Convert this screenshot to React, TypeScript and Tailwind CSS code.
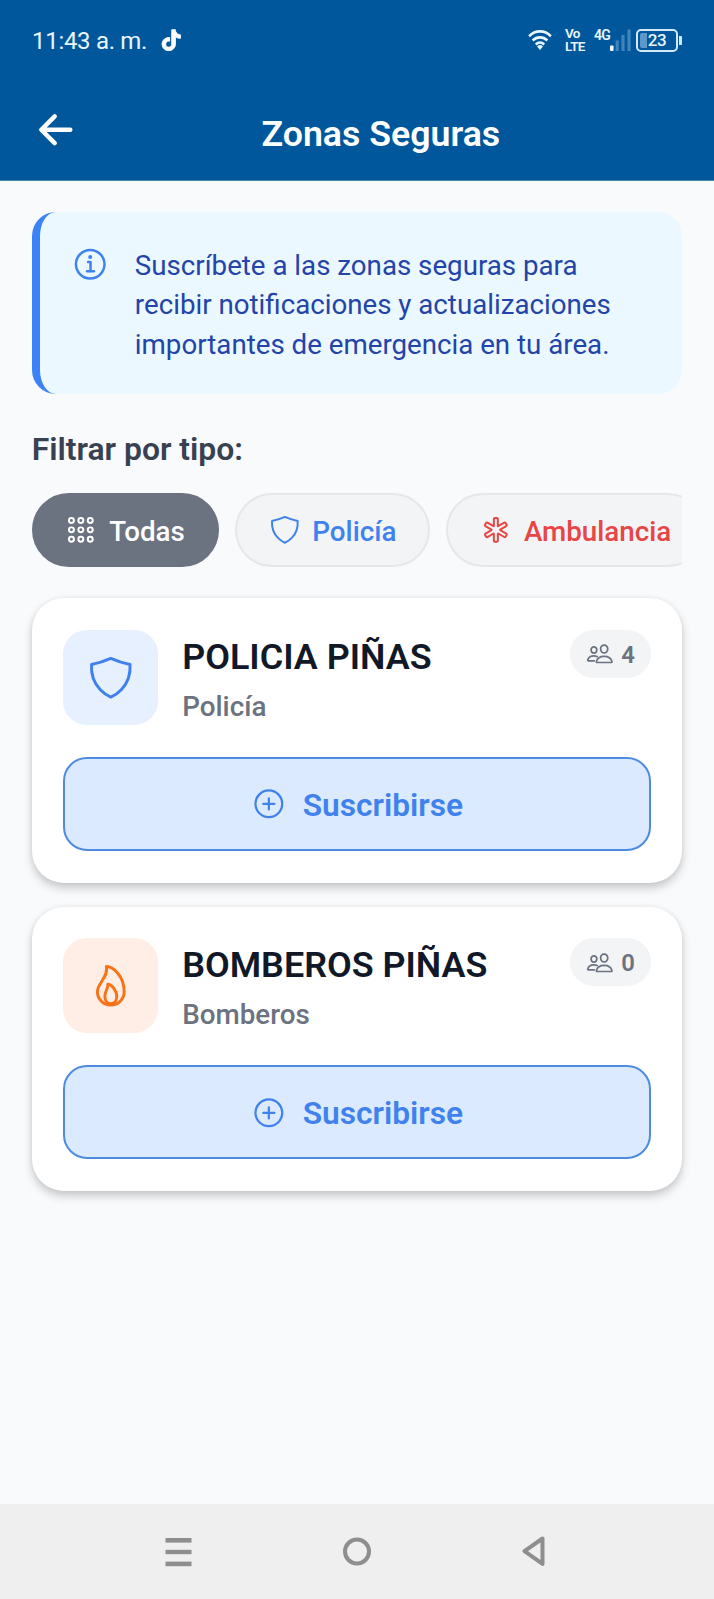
import type { ReactNode } from 'react';
import {
  IoAddCircleOutline,
  IoAppsOutline,
  IoArrowBack,
  IoFlameOutline,
  IoInformationCircleOutline,
  IoLogoTiktok,
  IoMedicalOutline,
  IoPeopleOutline,
  IoShieldOutline,
} from 'react-icons/io5';

function WifiIcon() {
  return (
    <svg width="24" height="20" viewBox="0 0 26 20" preserveAspectRatio="none" fill="none" stroke="#e9f6ff" strokeWidth="2.7">
      <path d="M1.2 6.2a17 17 0 0 1 23.6 0" />
      <path d="M5 10.4a12 12 0 0 1 16 0" />
      <path d="M8.4 14.4a7 7 0 0 1 9.2 0" />
      <path d="M9.8 16.4a5 5 0 0 1 6.4 0L13 20Z" fill="#e9f6ff" stroke="none" />
    </svg>
  );
}

function SignalBars() {
  return (
    <svg width="22" height="22" viewBox="0 0 22 22">
      <rect x="0" y="16.5" width="3.6" height="5.5" rx="1" fill="#f0f9ff" />
      <rect x="5.6" y="11.5" width="3.2" height="10.5" fill="#3f84bb" />
      <rect x="11.4" y="6" width="3.2" height="16" fill="#3f84bb" />
      <rect x="17.4" y="0.5" width="3.2" height="21.5" fill="#3f84bb" />
    </svg>
  );
}

function Battery() {
  return (
    <div className="flex items-center">
      <div className="relative flex h-[23px] w-[42px] items-center justify-center rounded-[5px] border-2 border-[#d3e9f8]">
        <div className="absolute left-[2px] top-[2px] h-[15px] w-[7px] rounded-l-[2px] bg-[#5c98c8]" />
        <span className="relative text-[17px] font-medium leading-none tracking-[-0.5px] text-[#e9f6ff]">23</span>
      </div>
      <div className="ml-[1px] h-[9px] w-[3px] rounded-r-[1px] bg-[#d3e9f8]" />
    </div>
  );
}

function StatusBar() {
  return (
    <div className="flex h-[80px] items-center pl-[32px] pr-[32px] text-[#e9f6ff]">
      <span className="pt-[1px] text-[24px] tracking-[-0.3px]">11:43 a. m.</span>
      <IoLogoTiktok className="ml-[13px] size-[22.5px] stroke-white stroke-[22] text-white" />
      <div className="ml-auto flex items-center">
        <WifiIcon />
        <div className="ml-[13px] flex w-[23px] flex-col text-[13.5px] font-semibold leading-[13px] tracking-[-0.6px]">
          <span>Vo</span>
          <span>LTE</span>
        </div>
        <div className="ml-[6px] flex h-[22px] items-start">
          <span className="w-[16px] text-[14px] font-semibold leading-[13px] tracking-[-0.8px]">4G</span>
          <SignalBars />
        </div>
        <div className="ml-[4px]">
          <Battery />
        </div>
      </div>
    </div>
  );
}

function Chip({ icon, label, className }: { icon: ReactNode; label: string; className: string }) {
  return (
    <button
      className={`flex h-[73.5px] shrink-0 items-center rounded-[40px] border-2 pl-[31.7px] pr-[32px] text-[27.75px] font-medium ${className}`}
    >
      {icon}
      <span className="ml-[12.1px] pt-[3px] leading-none">{label}</span>
    </button>
  );
}

function ZoneCard({
  icon,
  iconBg,
  name,
  type,
  members,
}: {
  icon: ReactNode;
  iconBg: string;
  name: string;
  type: string;
  members: number;
}) {
  return (
    <section className="h-[284.7px] rounded-[32px] bg-white p-[31.7px] shadow-[0_5px_10px_rgba(0,0,0,0.2),0_0_5px_rgba(0,0,0,0.06)]">
      <div className="flex items-start">
        <div className={`flex size-[95px] shrink-0 items-center justify-center rounded-[24px] ${iconBg}`}>
          {icon}
        </div>
        <div className="ml-[23.8px] flex flex-col">
          <h2 className="mt-[5.5px] text-[35.9px] font-semibold leading-[42px] text-[#111827]">{name}</h2>
          <p className="mt-[12.5px] text-[27.8px] font-medium leading-[34px] text-[#6b7280]">{type}</p>
        </div>
        <div className="ml-auto flex h-[48px] items-center rounded-[24px] bg-[#f3f4f6] px-[15.8px] text-[#6b7280]">
          <IoPeopleOutline className="size-[27.7px]" />
          <span className="ml-[8px] pt-[3px] text-[23.8px] font-semibold leading-none">{members}</span>
        </div>
      </div>
      <button className="mt-[32px] flex h-[94px] w-full items-center justify-center rounded-[24px] border-2 border-[#4d8be0] bg-[#dbeafe] text-[#3f82ee]">
        <IoAddCircleOutline className="size-[35.7px]" />
        <span className="ml-[16px] pt-[4px] text-[31.7px] font-semibold leading-none">Suscribirse</span>
      </button>
    </section>
  );
}

export default function App() {
  return (
    <div className="flex h-[1599px] w-[714px] flex-col overflow-hidden bg-[#f9fafc] font-['Roboto',sans-serif]">
      <header className="h-[181px] shrink-0 border-b border-[#3f8ba8] bg-[#01579b]">
        <StatusBar />
        <div className="flex h-[100px] items-center pl-[31.7px] text-white">
          <IoArrowBack className="size-[47.6px]" />
          <h1 className="ml-[182.2px] pt-[9px] text-[35.7px] font-semibold leading-none">Zonas Seguras</h1>
        </div>
      </header>

      <main className="flex-1 px-[31.7px] pt-[31px]">
        <div className="flex h-[182.4px] items-start rounded-[24px] border-l-8 border-[#3b82f6] bg-[#ebf8ff] pl-[31.7px] pt-[32.5px]">
          <IoInformationCircleOutline className="size-[39.7px] shrink-0 text-[#3f82ee]" />
          <p className="ml-[23.8px] mt-[1px] whitespace-nowrap text-[27.7px] leading-[39.7px] text-[#2344a8]">
            Suscríbete a las zonas seguras para
            <br />
            recibir notificaciones y actualizaciones
            <br />
            importantes de emergencia en tu área.
          </p>
        </div>

        <h3 className="mt-[36px] text-[31.9px] font-semibold leading-[38px] text-[#374151]">Filtrar por tipo:</h3>

        <div className="mt-[24.8px] flex gap-[16px] overflow-hidden">
          <Chip
            icon={<IoAppsOutline className="size-[31.7px]" />}
            label="Todas"
            className="border-[#6b7280] bg-[#6b7280] text-white"
          />
          <Chip
            icon={<IoShieldOutline className="size-[31.7px]" />}
            label="Policía"
            className="border-[#e5e7eb] bg-[#f3f4f6] text-[#3f82ee]"
          />
          <Chip
            icon={<IoMedicalOutline className="size-[31.7px]" />}
            label="Ambulancia"
            className="border-[#e5e7eb] bg-[#f3f4f6] text-[#e84545]"
          />
        </div>

        <div className="mt-[31.7px] flex flex-col gap-[23.6px]">
          <ZoneCard
            icon={<IoShieldOutline className="size-[47.6px] text-[#3f82ee]" />}
            iconBg="bg-[#e6f0ff]"
            name="POLICIA PIÑAS"
            type="Policía"
            members={4}
          />
          <ZoneCard
            icon={<IoFlameOutline className="size-[47.6px] text-[#f97316]" />}
            iconBg="bg-[#feeee5]"
            name="BOMBEROS PIÑAS"
            type="Bomberos"
            members={0}
          />
        </div>
      </main>

      <nav className="flex h-[95px] shrink-0 items-center justify-between bg-[#efefef] pl-[165px] pr-[168px]">
        <svg width="27" height="30" viewBox="0 0 27 30" fill="#8e8e8e">
          <rect x="0.5" y="1" width="26" height="4.6" />
          <rect x="0.5" y="12.8" width="26" height="4.4" />
          <rect x="0.5" y="24.6" width="26" height="4.6" />
        </svg>
        <svg width="30" height="30" viewBox="0 0 30 30" fill="none" stroke="#8e8e8e" strokeWidth="4">
          <circle cx="15" cy="14.5" r="12" />
        </svg>
        <svg width="25" height="31" viewBox="0 0 25 31" fill="none" stroke="#8e8e8e" strokeWidth="4" strokeLinejoin="round">
          <path d="M21.5 2.5v25.4L3.5 15.2Z" />
        </svg>
      </nav>
    </div>
  );
}
